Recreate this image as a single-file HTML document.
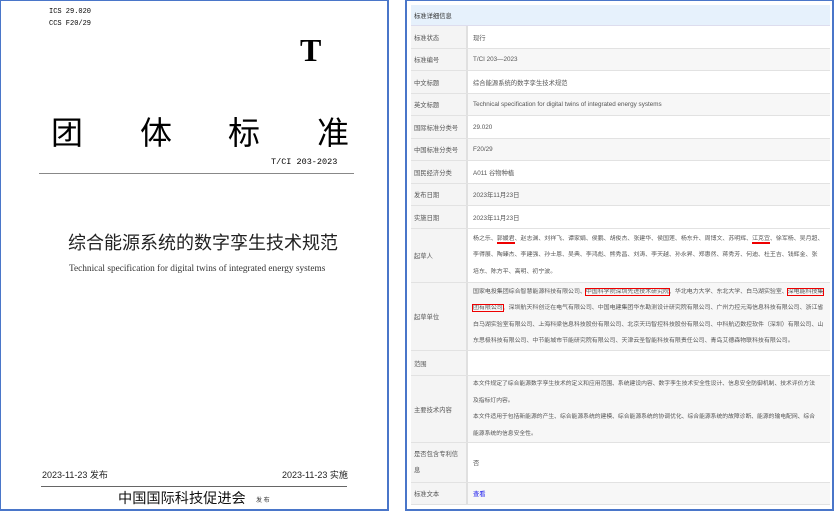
<!DOCTYPE html>
<html><head><meta charset="utf-8"><style>
*{margin:0;padding:0;box-sizing:border-box}
body{width:834px;height:511px;background:#fff;position:relative;overflow:hidden;font-family:"Liberation Sans","Noto Sans CJK SC",sans-serif;color:#000}
.a{position:absolute;white-space:nowrap}
#L{position:absolute;left:0;top:0;width:389px;height:511px;border:1px solid #4a76c9;border-width:1px 2px 2px 1px}
#R{position:absolute;left:405px;top:0;width:429px;height:511px;border:2px solid #4a76c9;border-top-width:1px}
.m{font-family:"Liberation Mono","Noto Sans CJK SC",monospace}
.row{position:absolute;left:4px;width:419px;border-bottom:1px solid #e2e2e2;font-size:6.3px;color:#555;white-space:nowrap;overflow:hidden}
.row .k{position:absolute;left:0;top:0;bottom:0;width:57px;border-right:2px solid #e0e0e0;padding-left:3px;display:flex;align-items:center;background:#f4f4f4;font-size:6.3px}
.row .v{position:absolute;left:59px;top:0;bottom:0;right:0;padding-left:3px;display:flex;flex-direction:column;justify-content:center}
.g{background:#f7f7f7}
.b{outline:1.5px solid #e00;outline-offset:0.5px}
.u{border-bottom:2px solid #e00}
.s{font-size:5.95px}
</style></head><body>
<div id="L">
<div class="a m" style="left:48px;top:7px;font-size:7px">ICS 29.020</div>
<div class="a m" style="left:48px;top:19px;font-size:7px">CCS F20/29</div>
<div class="a" style="left:299px;top:31px;font-size:32px;font-weight:bold;font-family:'Liberation Serif',serif">T</div>
<div class="a" style="left:50px;top:110px;font-size:32px;font-family:'Noto Sans CJK SC',sans-serif;line-height:40px">团</div>
<div class="a" style="left:139px;top:110px;font-size:32px;font-family:'Noto Sans CJK SC',sans-serif;line-height:40px">体</div>
<div class="a" style="left:227px;top:110px;font-size:32px;font-family:'Noto Sans CJK SC',sans-serif;line-height:40px">标</div>
<div class="a" style="left:316px;top:110px;font-size:32px;font-family:'Noto Sans CJK SC',sans-serif;line-height:40px">准</div>
<div class="a m" style="left:270px;top:156px;font-size:8.5px">T/CI 203-2023</div>
<div class="a" style="left:38px;top:172px;width:315px;height:1px;background:#888"></div>
<div class="a" style="left:67px;top:230px;font-size:18px;color:#222;line-height:24px">综合能源系统的数字孪生技术规范</div>
<div class="a" style="left:68px;top:263px;font-size:9.3px;font-family:'Liberation Serif',serif;color:#333">Technical specification for digital twins of integrated energy systems</div>
<div class="a" style="left:41px;top:467px;font-size:9px;color:#222">2023-11-23 发布</div>
<div class="a" style="left:281px;top:467px;font-size:9px;color:#222">2023-11-23 实施</div>
<div class="a" style="left:40px;top:485px;width:306px;height:1px;background:#666"></div>
<div class="a" style="left:117px;top:489px;font-size:14.2px;color:#111;line-height:18px">中国国际科技促进会</div>
<div class="a" style="left:255px;top:494px;font-size:6px;color:#333">发 布</div>
</div>
<div id="R">
<div class="row" style="top:4px;height:21px;background:#e6f1fc;color:#333;border-bottom:1px solid #dde"><div class="v" style="left:0;padding-left:3px">标准详细信息</div></div>
<div class="row" style="top:25px;height:23px"><div class="k">标准状态</div><div class="v">现行</div></div>
<div class="row g" style="top:48px;height:22px"><div class="k">标准编号</div><div class="v">T/CI 203—2023</div></div>
<div class="row" style="top:70px;height:23px"><div class="k">中文标题</div><div class="v">综合能源系统的数字孪生技术规范</div></div>
<div class="row g" style="top:93px;height:22px"><div class="k">英文标题</div><div class="v">Technical specification for digital twins of integrated energy systems</div></div>
<div class="row" style="top:115px;height:23px"><div class="k">国际标准分类号</div><div class="v">29.020</div></div>
<div class="row g" style="top:138px;height:22px"><div class="k">中国标准分类号</div><div class="v">F20/29</div></div>
<div class="row" style="top:160px;height:23px"><div class="k">国民经济分类</div><div class="v">A011 谷物种植</div></div>
<div class="row g" style="top:183px;height:22px"><div class="k">发布日期</div><div class="v">2023年11月23日</div></div>
<div class="row" style="top:205px;height:23px"><div class="k">实施日期</div><div class="v">2023年11月23日</div></div>
<div class="row s" style="top:228px;height:54px"><div class="k">起草人</div><div class="v" style="line-height:16.5px">
<div>杨之乐、<span class="u">郭媛君</span>、赵志渊、刘祥飞、谭家娟、侯鹏、胡俊杰、张建华、侯国莲、杨东升、周博文、苏明辉、<span class="u">江克宜</span>、徐军杨、吴月超、</div>
<div>李得展、陶臻杰、李建强、孙士恩、吴典、李鸿彪、熊秀昌、刘涛、李天越、孙永昇、郑惠然、蒋秀芳、何迪、杜王吉、钱辉金、张</div>
<div>培东、陈方平、高明、初宁波。</div></div></div>
<div class="row g s" style="top:282px;height:68px"><div class="k">起草单位</div><div class="v" style="line-height:16.5px">
<div>国家电投集团综合智慧能源科技有限公司、<span class="b">中国科学院深圳先进技术研究院</span>、华北电力大学、东北大学、白马湖实验室、<span class="b">深电能科技集</span></div>
<div><span class="b">团有限公司</span>、深圳航天科创泛在电气有限公司、中国电建集团华东勘测设计研究院有限公司、广州力控元海信息科技有限公司、浙江省</div>
<div>白马湖实验室有限公司、上海科梁信息科技股份有限公司、北京天玛智控科技股份有限公司、中科航迈数控软件（深圳）有限公司、山</div>
<div>东思极科技有限公司、中节能城市节能研究院有限公司、天津云圣智能科技有限责任公司、青岛艾德森物联科技有限公司。</div></div></div>
<div class="row" style="top:350px;height:25px"><div class="k">范围</div><div class="v"></div></div>
<div class="row g" style="top:375px;height:67px;font-size:5.8px"><div class="k">主要技术内容</div><div class="v" style="line-height:16.5px">
<div>本文件规定了综合能源数字孪生技术的定义和应用范围、系统建设内容、数字孪生技术安全性设计、信息安全防御机制、技术评价方法</div>
<div>及指标灯内容。</div>
<div>本文件适用于包括新能源的产生、综合能源系统的建模、综合能源系统的协调优化、综合能源系统的故障诊断、能源的输电配网、综合</div>
<div>能源系统的信息安全性。</div></div></div>
<div class="row" style="top:442px;height:40px"><div class="k" style="line-height:16px;white-space:normal">是否包含专利信<br>息</div><div class="v">否</div></div>
<div class="row g" style="top:482px;height:22px"><div class="k">标准文本</div><div class="v"><span style="color:#2222ee">查看</span></div></div>
</div>
</body></html>
